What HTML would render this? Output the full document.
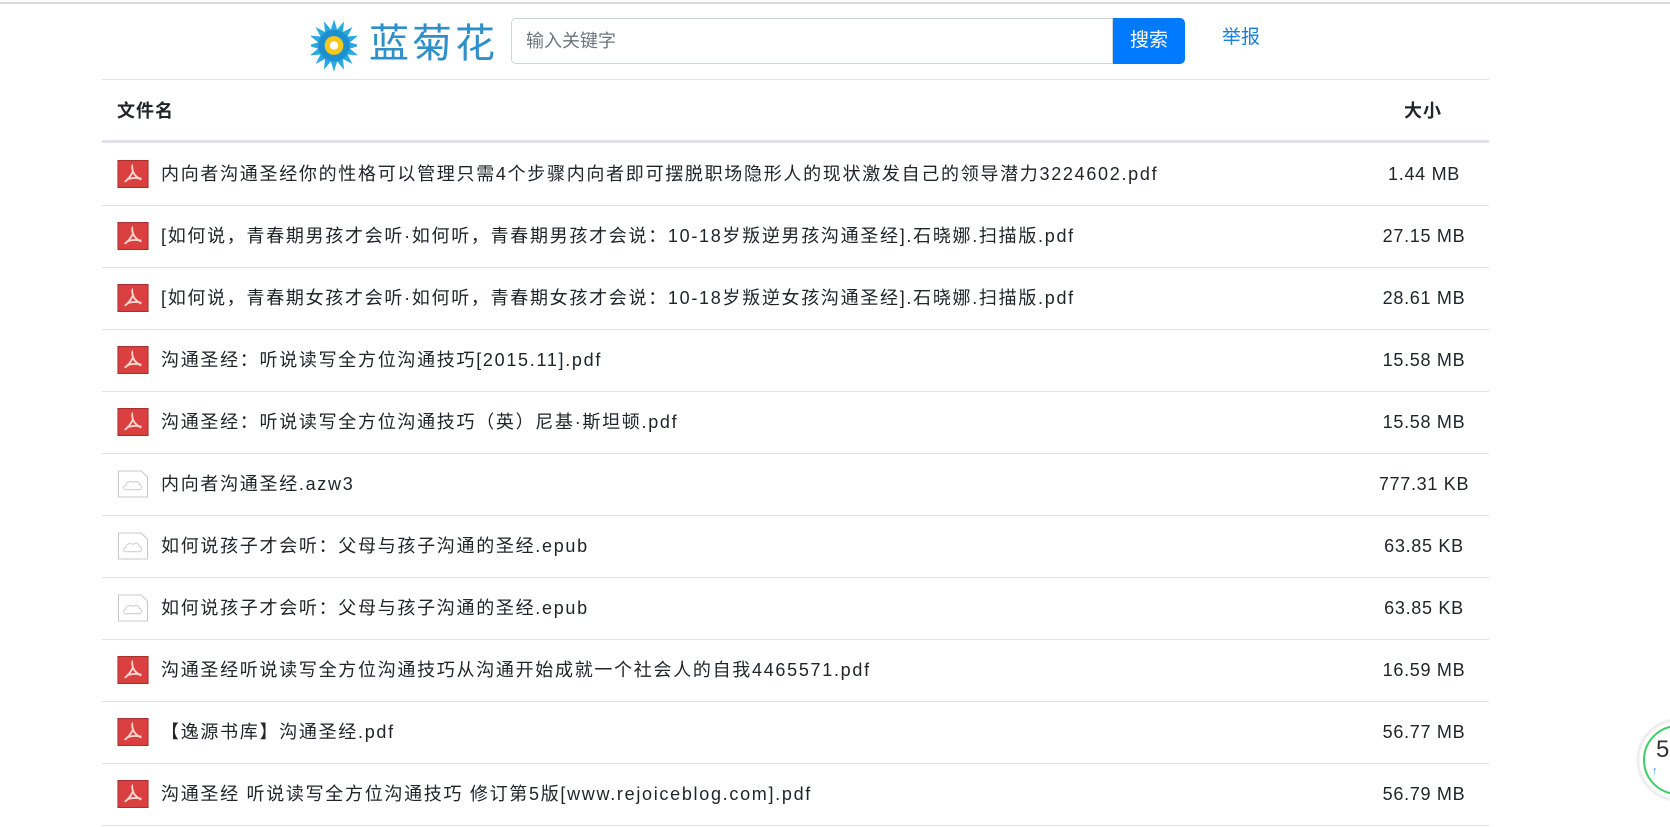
<!DOCTYPE html>
<html><head><meta charset="utf-8"><style>
body{margin:0;width:1670px;height:827px;overflow:hidden;background:#fff;font-family:"Liberation Sans","Noto Sans CJK SC",sans-serif;color:#212529;position:relative}
.topline{position:absolute;left:0;top:2px;width:1670px;height:2px;background:#d9d9d9}
.logo{position:absolute;left:311px;top:19px}
.logotext{position:absolute;left:369px;top:14px;font-size:40px;line-height:52px;color:#2e8fca;letter-spacing:3px;font-family:"Noto Sans CJK SC",sans-serif;font-weight:400}
.inp{position:absolute;left:511px;top:18px;width:602px;height:46px;border:1px solid #ced4da;border-radius:5px 0 0 5px;box-sizing:border-box;font-size:18px;line-height:44px;color:#6c757d;padding:0 14px}
.btn{position:absolute;left:1113px;top:18px;width:72px;height:46px;background:#007bff;color:#fff;border-radius:0 5px 5px 0;font-size:19px;text-align:center;line-height:46px}
.rep{position:absolute;left:1222px;top:24px;font-size:19px;line-height:28px;color:#1a7ee0}
.hl{position:absolute;left:102px;width:1387px;height:1px;background:#dee2e6}
.th{position:absolute;top:98px;font-size:18px;line-height:26px;font-weight:bold;letter-spacing:1px}
.row{position:absolute;left:102px;width:1387px;height:62px}
.row .ic{position:absolute;left:15px;top:17px}
.row .n{position:absolute;left:59px;top:0;line-height:62px;font-size:18px;white-space:nowrap;letter-spacing:1.7px}
.row .s{position:absolute;left:1257px;width:130px;text-align:center;top:0;line-height:62px;font-size:18px;letter-spacing:0.7px}
</style></head><body>
<div class="topline"></div>
<svg class="logo" width="46" height="53" viewBox="0 0 44 50">
<g transform="translate(22,25)">
<g fill="#29a9e0">
<polygon points="0,-25 4,-12 -4,-12" transform="rotate(0)"/><polygon points="0,-25 4,-12 -4,-12" transform="rotate(22.5)"/><polygon points="0,-25 4,-12 -4,-12" transform="rotate(45)"/><polygon points="0,-25 4,-12 -4,-12" transform="rotate(67.5)"/><polygon points="0,-25 4,-12 -4,-12" transform="rotate(90)"/><polygon points="0,-25 4,-12 -4,-12" transform="rotate(112.5)"/><polygon points="0,-25 4,-12 -4,-12" transform="rotate(135)"/><polygon points="0,-25 4,-12 -4,-12" transform="rotate(157.5)"/><polygon points="0,-25 4,-12 -4,-12" transform="rotate(180)"/><polygon points="0,-25 4,-12 -4,-12" transform="rotate(202.5)"/><polygon points="0,-25 4,-12 -4,-12" transform="rotate(225)"/><polygon points="0,-25 4,-12 -4,-12" transform="rotate(247.5)"/><polygon points="0,-25 4,-12 -4,-12" transform="rotate(270)"/><polygon points="0,-25 4,-12 -4,-12" transform="rotate(292.5)"/><polygon points="0,-25 4,-12 -4,-12" transform="rotate(315)"/><polygon points="0,-25 4,-12 -4,-12" transform="rotate(337.5)"/>
</g>
<circle r="15" fill="#1b8fd0"/><circle r="9" fill="#f2c81b"/><circle r="4" fill="#fff"/></g></svg>
<div class="logotext">蓝菊花</div>
<div class="inp">输入关键字</div>
<div class="btn">搜索</div>
<div class="rep">举报</div>
<div class="hl" style="top:79px"></div>
<div class="th" style="left:117px">文件名</div>
<div class="th" style="left:1404px">大小</div>
<div class="hl" style="top:140px;height:3px"></div>
<div id="rows"></div>
<script>
var pdf='<svg width="32" height="28" viewBox="0 0 30 27"><rect x="0.5" y="0.5" width="29" height="26" fill="#d9403f" stroke="#a83030"/><path d="M15 5c-1 0-1 3 0 6 1 3 4 6 8 8M15 11c-2 4-5 8-8 10M9 19c4-2 9-2 14-1" stroke="#f7d7d0" stroke-width="1.8" fill="none"/></svg>';
var doc='<svg width="32" height="28" viewBox="0 0 30 27"><path d="M1 1h22l6 6v19H1z" fill="#fff" stroke="#c8c8c8"/><path d="M8 19c-3 0-3-4 0-4 0-3 4-5 7-3 2-2 6-1 6 2 3 0 3 5 0 5z" fill="none" stroke="#d0d0d0"/></svg>';
var d=[[1,"内向者沟通圣经你的性格可以管理只需4个步骤内向者即可摆脱职场隐形人的现状激发自己的领导潜力3224602.pdf","1.44 MB"],
[1,"[如何说，青春期男孩才会听·如何听，青春期男孩才会说：10-18岁叛逆男孩沟通圣经].石晓娜.扫描版.pdf","27.15 MB"],
[1,"[如何说，青春期女孩才会听·如何听，青春期女孩才会说：10-18岁叛逆女孩沟通圣经].石晓娜.扫描版.pdf","28.61 MB"],
[1,"沟通圣经：听说读写全方位沟通技巧[2015.11].pdf","15.58 MB"],
[1,"沟通圣经：听说读写全方位沟通技巧（英）尼基·斯坦顿.pdf","15.58 MB"],
[0,"内向者沟通圣经.azw3","777.31 KB"],
[0,"如何说孩子才会听：父母与孩子沟通的圣经.epub","63.85 KB"],
[0,"如何说孩子才会听：父母与孩子沟通的圣经.epub","63.85 KB"],
[1,"沟通圣经听说读写全方位沟通技巧从沟通开始成就一个社会人的自我4465571.pdf","16.59 MB"],
[1,"【逸源书库】沟通圣经.pdf","56.77 MB"],
[1,"沟通圣经 听说读写全方位沟通技巧 修订第5版[www.rejoiceblog.com].pdf","56.79 MB"]];
var h='';d.forEach(function(r,i){var t=143+i*62;h+='<div class="row" style="top:'+t+'px"><div class="ic">'+(r[0]?pdf:doc)+'</div><div class="n">'+r[1]+'</div><div class="s">'+r[2]+'</div></div><div class="hl" style="top:'+(t+62)+'px"></div>';});
document.getElementById('rows').innerHTML=h;
</script>
<svg style="position:absolute;left:1636px;top:712px" width="34" height="96" viewBox="0 0 34 96"><circle cx="42" cy="48" r="40" fill="#fff" stroke="#eee" stroke-width="3"/><circle cx="42" cy="48" r="34" fill="#fff" stroke="#3ccf6a" stroke-width="2"/><text x="20" y="45" font-size="24" font-family="Liberation Sans" fill="#333">5</text><text x="16" y="62" font-size="11" fill="#3a8ee6">↑</text></svg>
</body></html>
